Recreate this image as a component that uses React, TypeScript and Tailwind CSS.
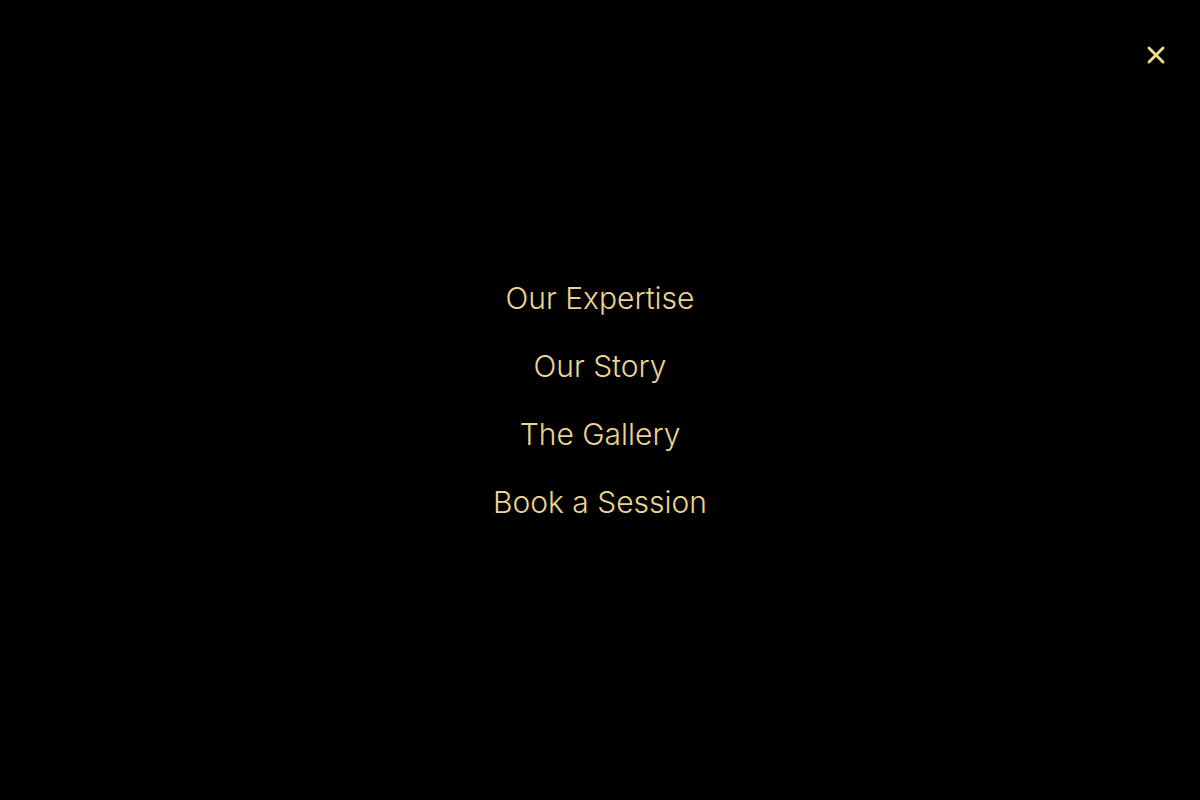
import { X } from 'lucide-react'

const links = ['Our Expertise', 'Our Story', 'The Gallery', 'Book a Session']

export default function App() {
  return (
    <div className="relative h-[800px] w-full bg-black font-['Inter',sans-serif]">
      <button className="absolute right-[30px] top-[41px] text-[#f0dc8a]" aria-label="Close menu">
        <X size={28} strokeWidth={2.5} />
      </button>
      <nav className="flex h-full flex-col items-center justify-center gap-8">
        {links.map(link => (
          <a key={link} href="#" className="text-3xl font-light text-[#ead491]">
            {link}
          </a>
        ))}
      </nav>
    </div>
  )
}
